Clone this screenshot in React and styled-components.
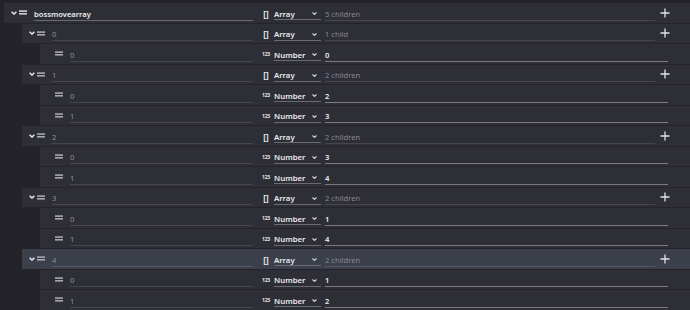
import styled, { createGlobalStyle } from 'styled-components'

const GlobalStyle = createGlobalStyle`
  html, body {
    margin: 0;
    padding: 0;
    background: #232329;
    font-family: "Noto Sans", "Open Sans", sans-serif;
  }
`;

const Pagina = styled.div`
  width: 690px;
  height: 310px;
  overflow: hidden;
  padding: 3px 0 0 4px;
  box-sizing: border-box;
`;

const Filhos = styled.div`
  margin-left: 18px;
`;

const Linha = styled.div`
  display: flex;
  align-items: center;
  height: 19.5px;
  margin-bottom: 1px;
  padding-left: 6px;
  background: ${({ destaque }) => (destaque ? '#3b404b' : '#2e2e36')};
`;

const Seta = styled.div`
  width: 8px;
  height: 100%;
  display: flex;
  align-items: center;
  justify-content: center;
`;

const Alca = styled.div`
  width: 8px;
  margin-left: 1px;
  display: flex;
  align-items: center;
`;

const Nome = styled.div`
  flex: 1;
  margin: 3px 5px 0 7px;
  height: 12px;
  line-height: 12px;
  font-size: 7.6px;
  font-weight: ${({ editavel }) => (editavel ? 600 : 400)};
  color: ${({ editavel }) => (editavel ? '#ececf0' : '#8e8e96')};
  border-bottom: 1px solid ${({ editavel, destaque }) =>
    editavel ? '#6a6a72' : destaque ? '#535863' : '#45454d'};
`;

const Direita = styled.div`
  width: 432px;
  display: flex;
  align-items: center;
  height: 100%;
`;

const IconeTipo = styled.div`
  width: 16px;
  text-align: center;
  color: #e6e6ea;
  font-weight: 700;
  font-size: ${({ numero }) => (numero ? '5px' : '8px')};
  letter-spacing: ${({ numero }) => (numero ? '-0.2px' : '0')};
  margin-top: 1px;
`;

const Seletor = styled.div`
  width: 47px;
  height: 12px;
  margin-top: 3px;
  display: flex;
  align-items: center;
  justify-content: space-between;
  box-sizing: border-box;
  padding-right: 4px;
  font-size: 7.8px;
  font-weight: 600;
  color: #e8e8ec;
  border-bottom: 1px solid #6a6a72;
`;

const Valor = styled.div`
  flex: 1;
  margin: 3px 0 0 4px;
  height: 12px;
  line-height: 12px;
  font-size: 7.6px;
  font-weight: ${({ numero }) => (numero ? 600 : 400)};
  color: ${({ numero }) => (numero ? '#ececf0' : '#86868e')};
  border-bottom: 1px solid ${({ numero, destaque }) =>
    numero ? '#7a7a80' : destaque ? '#535863' : '#46464e'};
`;

const ZonaMais = styled.div`
  width: ${({ vazio }) => (vazio ? '22px' : '35px')};
  display: flex;
  align-items: center;
  padding-left: ${({ vazio }) => (vazio ? '0' : '5px')};
  box-sizing: border-box;
`;

function SetaIcone() {
  return (
    <svg width="6" height="4" viewBox="0 0 6 4">
      <path d="M0.6 0.7 L3 3.1 L5.4 0.7" fill="none" stroke="#e8e8ec" strokeWidth="1.4" />
    </svg>
  );
}

function AlcaIcone({ forte }) {
  const cor = forte ? '#d0d0d4' : '#a8a8ae';
  return (
    <svg width="8" height="5" viewBox="0 0 8 5">
      <rect x="0" y="0.3" width="8" height="1.6" fill={cor} />
      <rect x="0" y="3" width="8" height="1.6" fill={cor} />
    </svg>
  );
}

function MaisIcone() {
  return (
    <svg width="10" height="10" viewBox="0 0 10 10">
      <path d="M5 0.5 V9.5 M0.5 5 H9.5" stroke="#e4e4ea" strokeWidth="1.3" />
    </svg>
  );
}

function SetaSeletor() {
  return (
    <svg width="5" height="3" viewBox="0 0 5 3">
      <path d="M0.5 0.5 L2.5 2.4 L4.5 0.5" fill="none" stroke="#d8d8dc" strokeWidth="1.1" />
    </svg>
  );
}

function LinhaItem({ nome, editavel, tipo, valor, destaque }) {
  const isArray = tipo === 'Array';
  return (
    <Linha destaque={destaque}>
      <Seta>{isArray && <SetaIcone />}</Seta>
      <Alca>
        <AlcaIcone forte={editavel} />
      </Alca>
      <Nome editavel={editavel} destaque={destaque}>{nome}</Nome>
      <Direita>
        <IconeTipo numero={!isArray}>{isArray ? '[]' : '123'}</IconeTipo>
        <Seletor>
          <span>{tipo}</span>
          <SetaSeletor />
        </Seletor>
        <Valor numero={!isArray} destaque={destaque}>{valor}</Valor>
        <ZonaMais vazio={!isArray}>{isArray && <MaisIcone />}</ZonaMais>
      </Direita>
    </Linha>
  );
}

const dados = [[0], [2, 3], [3, 4], [1, 4], [1, 2]];

const contar = (n) => (n === 1 ? '1 child' : `${n} children`);

export default function App() {
  return (
    <Pagina>
      <GlobalStyle />
      <LinhaItem nome="bossmovearray" editavel tipo="Array" valor={contar(dados.length)} />
      <Filhos>
        {dados.map((grupo, i) => (
          <div key={i}>
            <LinhaItem nome={String(i)} tipo="Array" valor={contar(grupo.length)} destaque={i === 4} />
            <Filhos>
              {grupo.map((v, j) => (
                <LinhaItem key={j} nome={String(j)} tipo="Number" valor={String(v)} />
              ))}
            </Filhos>
          </div>
        ))}
      </Filhos>
    </Pagina>
  );
}
